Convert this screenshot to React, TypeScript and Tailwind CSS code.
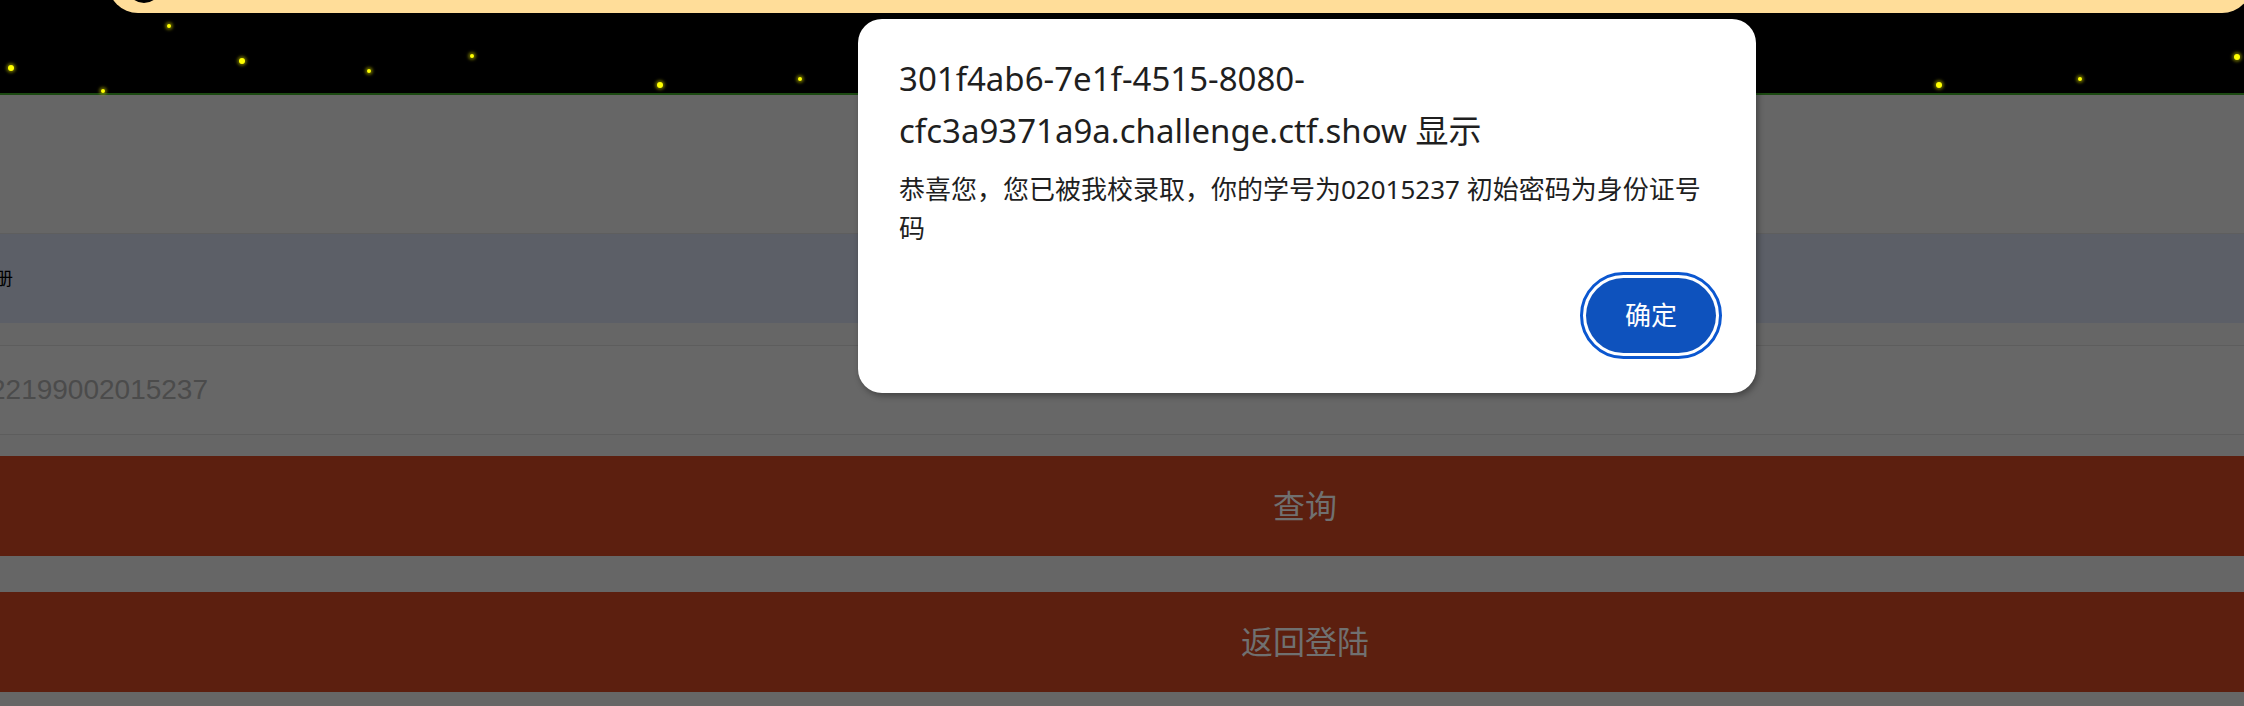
import React from 'react';

const stars = [
  { x: 11, y: 68, s: 6 },
  { x: 169, y: 26, s: 4 },
  { x: 242, y: 61, s: 6 },
  { x: 103, y: 91, s: 4 },
  { x: 369, y: 71, s: 4 },
  { x: 472, y: 56, s: 4 },
  { x: 660, y: 85, s: 6 },
  { x: 800, y: 79, s: 4 },
  { x: 1939, y: 85, s: 6 },
  { x: 2080, y: 79, s: 4 },
  { x: 2237, y: 57, s: 6 },
];

const cjk = "font-['Noto_Sans','Noto_Sans_CJK_SC',sans-serif]";

export default function App() {
  return (
    <div className="relative w-[2244px] h-[706px] overflow-hidden bg-[#666666]">
      {/* header: banner + starfield */}
      <div className="bg-black border-b-2 border-[#1c4a12]">
        <div className="h-[13px] flex flex-col justify-end">
          <div className="relative shrink-0 h-[43px] ml-[108px] -mr-[8px] rounded-b-[30px] bg-[#ffdd99]">
            <div className="absolute left-[19px] bottom-[10px] w-[34px] h-[34px] rounded-full border-[3px] border-black" />
          </div>
        </div>
        <div className="relative h-[80px]">
          {stars.map((st, i) => (
            <div
              key={i}
              className="absolute rounded-full bg-[#ffff00] shadow-[0_0_3px_2px_rgba(200,200,0,0.45)]"
              style={{ left: st.x - st.s / 2, top: st.y - 13 - st.s / 2, width: st.s, height: st.s }}
            />
          ))}
        </div>
      </div>

      {/* dimmed form */}
      <div className="h-[138px]" />
      <div className="h-[90px] border-t border-[#5e5e5e] bg-[#5c5f67] flex items-center">
        <span className={`-ml-[23px] text-[18px] text-black ${cjk}`}>注册</span>
      </div>
      <div className="h-[22px]" />
      <div className="h-[90px] border-y border-[#5d5d5d] bg-[#676767] flex items-center">
        <span className="-ml-[10px] text-[28px] text-[#4b4b4b] font-['Liberation_Sans',Arial,sans-serif]">
          22199002015237
        </span>
      </div>
      <div className="h-[21px]" />
      <div className={`h-[100px] bg-[#5c1f0f] flex items-center justify-center pl-[366px] text-[32px] text-[#707070] ${cjk}`}>
        查询
      </div>
      <div className="h-[36px]" />
      <div className={`h-[100px] bg-[#5c1f0f] flex items-center justify-center pl-[366px] text-[32px] text-[#707070] ${cjk}`}>
        返回登陆
      </div>

      {/* alert dialog */}
      <div
        className={`absolute left-[858px] top-[19px] w-[898px] h-[374px] bg-white rounded-[24px] shadow-[2px_3px_6px_rgba(0,0,0,0.35)] pt-[34px] px-[41px] pb-[34px] flex flex-col ${cjk}`}
      >
        <div className="text-[33px] leading-[52px] text-[#1f1f1f]">
          301f4ab6-7e1f-4515-8080-
          <br />
          cfc3a9371a9a.challenge.ctf.show 显示
        </div>
        <div className="mt-[13px] text-[26px] leading-[39px] text-[#1f1f1f]">
          恭喜您，您已被我校录取，你的学号为02015237 初始密码为身份证号码
        </div>
        <div className="mt-auto flex justify-end -mr-[7px]">
          <div className="rounded-full border-[3px] border-[#0b57d0] p-[3px] bg-white">
            <div className="w-[130px] h-[75px] rounded-full bg-[#0e52bd] flex items-center justify-center text-[26px] text-white">
              确定
            </div>
          </div>
        </div>
      </div>
    </div>
  );
}
